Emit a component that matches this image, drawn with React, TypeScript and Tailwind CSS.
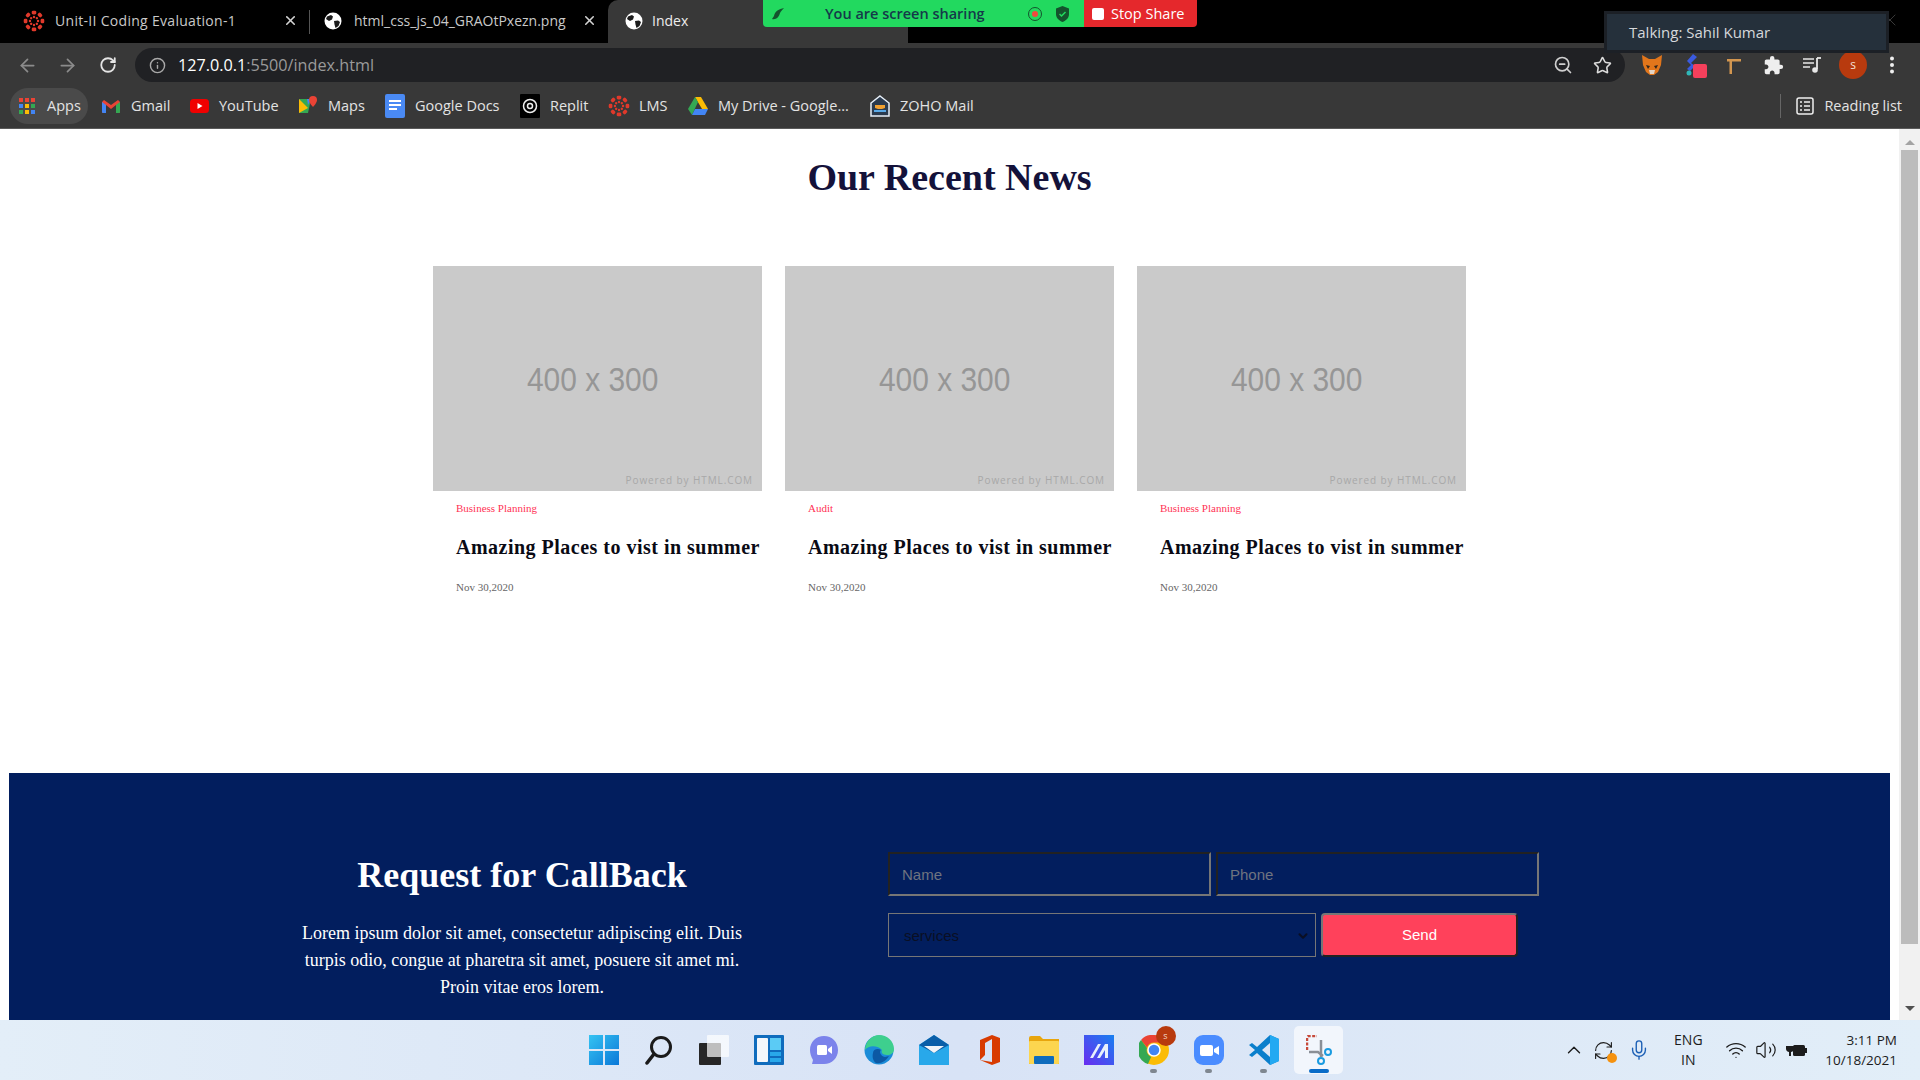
import { ArrowLeft, ArrowRight, ChevronDown, ChevronUp, Info, Mic, RefreshCw, RotateCw, Star, Volume2, Wifi, X, ZoomOut } from "lucide-react";
import { MdExtension } from "react-icons/md";

const ui = "font-['Open_Sans',sans-serif]";
const serif = "font-['Liberation_Serif',serif]";

function Canvas({ size = 22 }: { size?: number }) {
  const dots = [0, 45, 90, 135, 180, 225, 270, 315];
  return (
    <svg width={size} height={size} viewBox="0 0 24 24">
      {dots.map((a) => (
        <g key={a} transform={`rotate(${a} 12 12)`}>
          <rect x="9.5" y="0.8" width="5" height="4" rx="1.5" fill="#e0392b" />
          <circle cx="12" cy="7.6" r="1.3" fill="#e0392b" />
        </g>
      ))}
    </svg>
  );
}

function Globe() {
  return (
    <svg width="18" height="18" viewBox="0 0 18 18">
      <circle cx="9" cy="9" r="8.5" fill="#fff" />
      <path d="M3 4.5 7 3l2 1.5-1 3-3 1.5L2 7zM10 9l4-.5 2 1.500-1.500 4-3 2-1-3.500z" fill="#1c1c1c" />
    </svg>
  );
}

function Bookmark({ icon, label, w }: { icon: React.ReactNode; label: string; w: string }) {
  return (
    <div className={`flex items-center gap-[9px] ${w}`}>
      <span className="flex w-[22px] justify-center">{icon}</span>
      <span className="whitespace-nowrap">{label}</span>
    </div>
  );
}

function Tab({ title, icon, className, lead, text }: { title: string; icon: React.ReactNode; className: string; lead: string; text: string }) {
  return (
    <div className={`flex h-[43px] items-center pb-[2px] ${className}`}>
      <span className={`flex w-[22px] justify-center ${lead}`}>{icon}</span>
      <span className={`ml-[10px] flex-1 overflow-hidden whitespace-nowrap text-[#c9c9c9] ${text}`}>{title}</span>
      <X size={15} strokeWidth={2.5} className="mr-[11px] ml-[8px] text-[#d4d4d4]" />
    </div>
  );
}

function NewsCard({ category }: { category: string }) {
  return (
    <div className="w-[329px]">
      <div className="relative flex h-[225px] items-center justify-center bg-[#cacaca] pt-[2px] pr-[9px] font-['Liberation_Sans',sans-serif] text-[34px] text-[#969696]">
        <span className="scale-x-[0.88]">400 x 300</span>
        <span className={`absolute right-[9px] bottom-[3px] text-[10px] tracking-[0.9px] text-[#a8a8a8] ${ui}`}>Powered by HTML.COM</span>
      </div>
      <div className={`pl-[23px] ${serif}`}>
        <p className="mt-[10px] text-[11px] leading-[14px] text-[#ff3355]">{category}</p>
        <h3 className="mt-[20px] text-[20px] leading-[24px] font-bold tracking-[0.49px] whitespace-nowrap text-[#0a0a14]">
          Amazing Places to vist in summer
        </h3>
        <p className="mt-[21px] text-[11px] leading-[14px] text-[#666]">Nov 30,2020</p>
      </div>
    </div>
  );
}

function TaskIcon({ children, active, dot }: { children: React.ReactNode; active?: boolean; dot?: boolean }) {
  return (
    <div className="relative flex h-[48px] w-[55px] items-center justify-center">
      {active && <span className="absolute inset-y-0 left-[3px] w-[49px] rounded-[5px] bg-[#f2f6fc]" />}
      <span className="relative flex">{children}</span>
      {dot && <span className="absolute bottom-[1px] h-[4px] w-[7px] rounded-full bg-[#7f8790]" />}
      {active && <span className="absolute bottom-[1px] h-[4px] w-[20px] rounded-full bg-[#0a6cc8]" />}
    </div>
  );
}

export default function App() {
  return (
    <div className={`flex h-[1080px] w-[1920px] flex-col overflow-hidden bg-white ${ui}`}>
      {/* tab strip */}
      <div className="relative flex h-[43px] shrink-0 bg-black">
        <Tab title="Unit-II Coding Evaluation-1" icon={<Canvas />} className="w-[309px]" lead="ml-[23px]" text="text-[14px] tracking-[0.3px]" />
        <span className="mt-[10px] h-[24px] w-px bg-[#555]" />
        <Tab title="html_css_js_04_GRAOtPxezn.png" icon={<Globe />} className="w-[298px]" lead="ml-[12px]" text="text-[14px]" />
        <div className="flex h-[43px] w-[300px] items-center rounded-t-[10px] bg-[#383838] pb-[2px]">
          <span className="ml-[15px] flex w-[22px] justify-center"><Globe /></span>
          <span className="ml-[7px] text-[14px] text-[#eee]">Index</span>
        </div>
        {/* zoom share bar */}
        <div className="absolute top-0 left-[763px] flex h-[27px] items-stretch overflow-hidden rounded-b-[4px]">
          <div className="flex w-[321px] items-center bg-[#22d95f] pl-[8px]">
            <svg width="14" height="14" viewBox="0 0 14 14"><path d="M13 1C8 2 4 4 3 9L1 12c4 1 7-2 8-6 1-2 3-4 4-5z" fill="#14532d" /></svg>
            <span className="ml-[40px] text-[14.5px] font-semibold text-[#153a4a]">You are screen sharing</span>
            <svg className="ml-[42px]" width="16" height="16" viewBox="0 0 16 16"><circle cx="8" cy="8" r="6.500" fill="none" stroke="#14532d" /><circle cx="8" cy="8" r="3" fill="#f0493e" /></svg>
            <svg className="ml-[12px]" width="15" height="16" viewBox="0 0 15 16"><path d="M7.500 0 14 2.500V8c0 4-3 6.500-6.500 8C4 14.500 1 12 1 8V2.500z" fill="#14532d" /><path d="m4.500 8 2 2 4-4" stroke="#22d95f" strokeWidth="1.500" fill="none" /></svg>
          </div>
          <div className="flex w-[113px] items-center bg-[#e5282c] pl-[8px] text-[14.5px] text-white">
            <span className="h-[12px] w-[12px] rounded-[2px] bg-white" />
            <span className="ml-[7px]">Stop Share</span>
          </div>
        </div>
        {/* talking popup */}
        <div className="absolute top-[11px] left-[1604px] z-10 flex h-[42px] w-[285px] items-center border-[3px] border-[#1c2026] bg-[#25303b] pl-[22px] text-[15px] text-[#d5d8dc]">
          Talking: Sahil Kumar
        </div>
        <X size={20} strokeWidth={1} className="absolute top-[10px] right-[20px] text-[#444]" />
      </div>

      {/* toolbar */}
      <div className="flex h-[44px] shrink-0 items-center bg-[#383838] pl-[17px]">
        <ArrowLeft size={21} className="text-[#8b8b8b]" />
        <ArrowRight size={21} className="ml-[19px] text-[#8b8b8b]" />
        <RotateCw size={18} strokeWidth={2.4} className="ml-[21px] text-[#e4e4e4]" />
        <div className="ml-[18px] flex h-[34px] w-[1490px] items-center rounded-full bg-[#202124] pl-[14px]">
          <Info size={17} className="text-[#a9a9a9]" />
          <span className="ml-[12px] text-[16.2px]">
            <span className="text-white">127.0.0.1</span>
            <span className="text-[#9a9a9a]">:5500/index.html</span>
          </span>
          <span className="flex-1" />
          <ZoomOut size={20} className="text-[#cfcfcf]" />
          <Star size={19} strokeWidth={2} className="mr-[13px] ml-[20px] text-[#dcdcdc]" />
        </div>
        <svg className="ml-[16px]" width="22" height="20" viewBox="0 0 22 20"><path d="M1 0l7 4h6l7-4-1 10-3 7-4 3H9l-4-3-3-7z" fill="#e2761b" /><path d="M5 10l4 1-2 3zM17 10l-4 1 2 3z" fill="#33261a" /><path d="M8 15h6l-1 4H9z" fill="#e4d5c6" /></svg>
        <div className="relative ml-[23px] h-[24px] w-[14px]">
          <svg width="12" height="24" viewBox="0 0 12 24"><path d="M7 1l4 3-6 6 4 3-5 5-3-2 4-4-4-4z" fill="#3a5be0" /><circle cx="3" cy="20" r="2.500" fill="#2fb7b7" /></svg>
          <span className="absolute top-[11px] left-[7px] h-[14px] w-[14px] rounded-[2px] bg-[#f5405c]" />
        </div>
        <svg className="ml-[26px]" width="16" height="20" viewBox="0 0 16 20"><path d="M1 4h14v2.500H6V19H3.500V6.500H1z" fill="#d3964f" /></svg>
        <MdExtension size={21} className="ml-[21px] text-[#eee]" />
        <svg className="ml-[19px]" width="18" height="18" viewBox="0 0 18 18"><path d="M0 3h11M0 7h11M0 11h7" stroke="#e8e8e8" strokeWidth="1.600" /><path d="M14 2v11" stroke="#e8e8e8" strokeWidth="1.800" /><path d="M14 2h4" stroke="#e8e8e8" strokeWidth="1.800" /><circle cx="12" cy="14" r="2.800" fill="#e8e8e8" /></svg>
        <div className="ml-[18px] flex h-[28px] w-[28px] items-center justify-center rounded-full bg-[#b83a0e] text-[12px] text-[#f5e0d8]">s</div>
        <svg className="ml-[23px]" width="4" height="18" viewBox="0 0 4 18"><circle cx="2" cy="2.500" r="2" fill="#eee" /><circle cx="2" cy="9" r="2" fill="#eee" /><circle cx="2" cy="15.500" r="2" fill="#eee" /></svg>
      </div>

      {/* bookmarks */}
      <div className="flex h-[42px] shrink-0 items-center border-b border-[#5a5a5a] bg-[#383838] pb-[3px] pl-[10px] text-[14.5px] text-[#e3e3e3]">
        <div className="flex h-[36px] w-[78px] items-center rounded-full bg-[#4a4a4a] pl-[8px]">
          <svg width="18" height="18" viewBox="0 0 18 18">
            {["#ea4335", "#ea4335", "#ea4335", "#4285f4", "#fbbc05", "#34a853", "#34a853", "#fbbc05", "#4285f4"].map((c, i) => (
              <rect key={i} x={1 + (i % 3) * 6} y={1 + Math.floor(i / 3) * 6} width="4" height="4" fill={c} />
            ))}
          </svg>
          <span className="ml-[11px]">Apps</span>
        </div>
        <Bookmark w="w-[88px] ml-[12px]" label="Gmail" icon={<svg width="18" height="14" viewBox="0 0 18 14"><path d="M0 3v10a1 1 0 0 0 1 1h3V6l5 4 5-4v8h3a1 1 0 0 0 1-1V3l-2-2-7 5-7-5z" fill="#ea4335" /><path d="M0 3v10a1 1 0 0 0 1 1h3V6z" fill="#4285f4" /><path d="M18 3v10a1 1 0 0 1-1 1h-3V6z" fill="#34a853" /></svg>} />
        <Bookmark w="w-[109px]" label="YouTube" icon={<svg width="19" height="14" viewBox="0 0 19 14"><rect width="19" height="14" rx="3.500" fill="#f00000" /><path d="m7.500 4 5 3-5 3z" fill="#fff" /></svg>} />
        <Bookmark w="w-[87px]" label="Maps" icon={<svg width="18" height="20" viewBox="0 0 18 20"><path d="M0 3h12l-3 14H0z" fill="#34a853" /><path d="M0 3l9 9-9 5z" fill="#fbbc05" /><path d="M8 3h4l-3 6z" fill="#4285f4" /><path d="M14 0a4 4 0 0 1 4 4c0 3-4 7-4 7s-4-4-4-7a4 4 0 0 1 4-4z" fill="#ea4335" /></svg>} />
        <Bookmark w="w-[135px]" label="Google Docs" icon={<svg width="20" height="24" viewBox="0 0 20 24"><rect width="20" height="24" rx="2" fill="#4a8af4" /><path d="M4 7h12M4 11h12M4 15h8" stroke="#fff" strokeWidth="2" /></svg>} />
        <Bookmark w="w-[89px]" label="Replit" icon={<svg width="20" height="24" viewBox="0 0 20 24"><rect width="20" height="24" rx="1" fill="#000" /><circle cx="10" cy="12" r="6.500" fill="none" stroke="#eee" strokeWidth="1.500" /><circle cx="10" cy="12" r="2.500" fill="none" stroke="#eee" strokeWidth="1.500" /></svg>} />
        <Bookmark w="w-[79px]" label="LMS" icon={<Canvas />} />
        <Bookmark w="w-[182px]" label="My Drive - Google..." icon={<svg width="20" height="18" viewBox="0 0 20 18"><path d="M7 0h6l7 12h-6z" fill="#fbbc05" /><path d="M7 0l3 5-6 13-4-6z" fill="#34a853" /><path d="M4 18l3-6h13l-3 6z" fill="#4285f4" /></svg>} />
        <Bookmark w="w-[110px]" label="ZOHO Mail" icon={<svg width="20" height="22" viewBox="0 0 20 22"><path d="M10 1 19 8v13H1V8z" fill="#2a3a4e" stroke="#e8f0f8" strokeWidth="1.500" /><path d="M5 10h10v3l-3 1H8L5 13z" fill="#f0a030" /><path d="M4 16h12" stroke="#5aa9e6" strokeWidth="2" /></svg>} />
        <span className="flex-1" />
        <span className="h-[24px] w-px bg-[#666]" />
        <svg className="ml-[15px]" width="18" height="18" viewBox="0 0 18 18"><rect x="1" y="1" width="16" height="16" rx="2" fill="none" stroke="#eee" strokeWidth="1.500" /><path d="M4 5h2M8 5h6M4 9h2M8 9h6M4 13h2M8 13h6" stroke="#eee" strokeWidth="1.500" /></svg>
        <span className="mr-[18px] ml-[10px]">Reading list</span>
      </div>

      {/* page */}
      <div className="flex h-[891px] shrink-0">
        <div className="flex w-[1899px] flex-col px-[9px]">
          <section className="flex h-[644px] flex-col items-center">
            <h2 className={`mt-[23px] text-[38px] leading-[50px] font-bold text-[#14123a] ${serif}`}>Our Recent News</h2>
            <div className="mt-[64px] flex gap-[23px]">
              <NewsCard category="Business Planning" />
              <NewsCard category="Audit" />
              <NewsCard category="Business Planning" />
            </div>
          </section>
          <section className="flex h-[247px] overflow-hidden bg-[#021e5e] text-white">
            <div className={`mt-[79px] ml-[278px] w-[470px] text-center ${serif}`}>
              <h2 className="text-[36px] leading-[46px] font-bold">Request for CallBack</h2>
              <p className="mt-[22px] text-[18px] leading-[27px]">
                Lorem ipsum dolor sit amet, consectetur adipiscing elit. Duis turpis odio, congue at pharetra sit amet, posuere sit amet mi. Proin vitae eros lorem.
              </p>
            </div>
            <div className="mt-[79px] ml-[131px] font-['Liberation_Sans',sans-serif] text-[15px]">
              <div className="flex gap-[5px]">
                <div className="flex h-[44px] w-[323px] items-center border-2 border-t-[#222] border-r-[#767676] border-b-[#767676] border-l-[#222] pt-[2px] pl-[12px] text-[#6f7480]">Name</div>
                <div className="flex h-[44px] w-[323px] items-center border-2 border-t-[#222] border-r-[#767676] border-b-[#767676] border-l-[#222] pt-[2px] pl-[12px] text-[#6f7480]">Phone</div>
              </div>
              <div className="mt-[17px] flex gap-[5px]">
                <div className="flex h-[44px] w-[428px] items-center border border-[#767676] pt-[2px] pl-[15px] text-[#0a0f24]">
                  services
                  <ChevronDown size={14} strokeWidth={3.5} className="mr-[5px] ml-auto text-[#0a0f24]" />
                </div>
                <div className="flex h-[44px] w-[197px] items-center justify-center rounded-[4px] border-2 border-t-[#767676] border-r-[#222] border-b-[#222] border-l-[#767676] bg-[#ff415b] pt-[1px] font-medium text-[#fff]">Send</div>
              </div>
            </div>
          </section>
        </div>
        <div className="flex w-[21px] flex-col items-center bg-[#f1f1f1]">
          <span className="mt-[11px] h-0 w-0 border-x-[5px] border-b-[5px] border-x-transparent border-b-[#a3a3a3]" />
          <span className="mt-[5px] h-[794px] w-[17px] bg-[#bcbcbc]" />
          <span className="mt-[62px] h-0 w-0 border-x-[5px] border-t-[5px] border-x-transparent border-t-[#505050]" />
        </div>
      </div>

      {/* taskbar */}
      <div className="flex h-[60px] shrink-0 items-center bg-gradient-to-r from-[#e3eef8] via-[#d8e3f6] to-[#e2eef8]">
        <div className="ml-[576px] flex items-center">
          <TaskIcon><svg width="30" height="30" viewBox="0 0 30 30"><defs><linearGradient id="s" x1="0" y1="0" x2="1" y2="1"><stop offset="0" stopColor="#35c3f2" /><stop offset="1" stopColor="#0a78d8" /></linearGradient></defs><path d="M0 0h14v14H0zM16 0h14v14H16zM0 16h14v14H0zM16 16h14v14H16z" fill="url(#s)" /></svg></TaskIcon>
          <TaskIcon><svg width="28" height="30" viewBox="0 0 28 30"><circle cx="16" cy="12" r="9.500" fill="none" stroke="#1a1a1a" strokeWidth="3" /><path d="M9 19 2 28" stroke="#1a1a1a" strokeWidth="3.500" strokeLinecap="round" /></svg></TaskIcon>
          <TaskIcon><svg width="30" height="30" viewBox="0 0 30 30"><rect x="0" y="8" width="22" height="22" rx="1" fill="#262626" /><rect x="8" y="0" width="22" height="22" rx="1" fill="#fff" fillOpacity="0.7" /></svg></TaskIcon>
          <TaskIcon><svg width="30" height="30" viewBox="0 0 30 30"><rect width="30" height="30" rx="1" fill="#0f6cbd" /><rect x="3" y="3" width="11" height="24" rx="1" fill="#f4f7fb" /><rect x="16" y="3" width="11" height="12" fill="#5bcbf5" /><rect x="16" y="17" width="11" height="4" fill="#28a8ea" /><rect x="16" y="23" width="11" height="4" fill="#28a8ea" /></svg></TaskIcon>
          <TaskIcon><svg width="30" height="30" viewBox="0 0 30 30"><path d="M15 1c8 0 14 6 14 14s-6 14-14 14H3l1-4C2 22 1 18 1 15 1 7 7 1 15 1z" fill="#7b83eb" /><rect x="8" y="10" width="10" height="10" rx="1.500" fill="#fff" /><path d="m19 14 4-3v8l-4-3z" fill="#fff" /></svg></TaskIcon>
          <TaskIcon><svg width="30" height="30" viewBox="0 0 30 30"><circle cx="15" cy="15" r="14.500" fill="#1b8cd8" /><path d="M1 14C2 5 9 0 15 0c8 0 15 6 15 14 0 4-3 6-7 6-5 0-6-3-5-5-3-4-13-6-17 0z" fill="#3ecf8e" /><path d="M9 18c0-4 5-5 8-3-2 1-1 6 4 7l4-1c-3 5-8 8-13 7-3-2-4-6-3-10z" fill="#0c59a4" /></svg></TaskIcon>
          <TaskIcon><svg width="30" height="30" viewBox="0 0 30 30"><path d="M0 10 15 0l15 10v20H0z" fill="#28a8ea" /><path d="M0 10 15 0l15 10-15 8z" fill="#0a5ea8" /><path d="M5 11h20l-10 7z" fill="#f0f4f8" /></svg></TaskIcon>
          <TaskIcon><svg width="24" height="30" viewBox="0 0 24 30"><path d="M3 5 15 0l8 3v24l-8 3-12-5 12 2V4L8 8v12l-5 5z" fill="#d83b01" /></svg></TaskIcon>
          <TaskIcon><svg width="30" height="28" viewBox="0 0 30 28"><path d="M0 2a2 2 0 0 1 2-2h9l3 3h16v25H0z" fill="#e8a50d" /><rect y="5" width="30" height="23" rx="1" fill="#fcd54f" /><rect x="5" y="20" width="20" height="8" rx="1" fill="#0f6cbd" /></svg></TaskIcon>
          <TaskIcon><svg width="30" height="30" viewBox="0 0 30 30"><defs><linearGradient id="m" x1="0" y1="1" x2="1" y2="0"><stop offset="0" stopColor="#6a2cf0" /><stop offset="1" stopColor="#1780f0" /></linearGradient></defs><rect width="30" height="30" fill="url(#m)" /><path d="M6 23 14 9h3L9 23zM13 23l8-14h3v14h-3v-8l-5 8z" fill="#e8f0fc" /></svg></TaskIcon>
          <TaskIcon dot>
            <svg width="30" height="30" viewBox="0 0 30 30"><circle cx="15" cy="15" r="15" fill="#fbbc05" /><path d="M15 0a15 15 0 0 1 13 7.500H15a7.500 7.500 0 0 0-7 5L2 5a15 15 0 0 1 13-5z" fill="#ea4335" /><path d="M2 5l6 8a7.500 7.500 0 0 0 4 9l-3 7A15 15 0 0 1 2 5z" fill="#34a853" /><circle cx="15" cy="15" r="6" fill="#4285f4" stroke="#fff" strokeWidth="1.500" /></svg>
            <span className="absolute top-[-9px] right-[-7px] flex h-[20px] w-[20px] items-center justify-center rounded-full bg-[#b83a0e] text-[9px] text-[#f5d8c8]">s</span>
          </TaskIcon>
          <TaskIcon dot><svg width="30" height="30" viewBox="0 0 30 30"><rect width="30" height="30" rx="9" fill="#4a8cff" /><rect x="6" y="10" width="13" height="11" rx="2" fill="#fff" /><path d="m20 14 5-3v9l-5-3z" fill="#fff" /></svg></TaskIcon>
          <TaskIcon dot><svg width="30" height="30" viewBox="0 0 30 30"><path d="M21 0 30 4v22l-9 4L8 18l-5 4-3-2 6-5-6-5 3-2 5 4z" fill="#0a7fcc" /><path d="M21 0 30 4v22l-9 4z" fill="#23a9f2" /><path d="M21 8 13 15l8 7z" fill="#dce7f6" /></svg></TaskIcon>
          <TaskIcon active><svg width="26" height="30" viewBox="0 0 26 30"><path d="M1 15V3a2 2 0 0 1 2-2h8" fill="none" stroke="#c74a3a" strokeWidth="2.500" strokeDasharray="3 1.500" /><path d="M3 17h9l5 4" stroke="#8a8f96" strokeWidth="2.500" fill="none" /><path d="M15 5v17" stroke="#8a8f96" strokeWidth="2.500" /><circle cx="22" cy="17" r="3" fill="none" stroke="#1a9be0" strokeWidth="2" /><circle cx="15" cy="26" r="3" fill="none" stroke="#1a9be0" strokeWidth="2" /></svg></TaskIcon>
        </div>
        <div className="flex flex-1 items-center justify-end pr-[23px] text-[#1c1c1c]">
          <ChevronUp size={22} strokeWidth={1.500} />
          <div className="relative ml-[8px]">
            <RefreshCw size={21} strokeWidth={1.300} />
            <span className="absolute right-[-3px] bottom-[-2px] h-[10px] w-[10px] rounded-full bg-[#f5920f]" />
          </div>
          <Mic size={22} strokeWidth={1.500} className="ml-[14px] text-[#1b5fb5]" />
          <div className="ml-[13px] w-[50px] text-center text-[14px] leading-[20px]"><div>ENG</div><div>IN</div></div>
          <Wifi size={22} strokeWidth={1.500} className="ml-[12px]" />
          <Volume2 size={22} strokeWidth={1.300} className="ml-[8px]" />
          <svg className="ml-[8px]" width="22" height="18" viewBox="0 0 22 18"><path d="M3 1v4M7 1v4M1 5h8v3c0 2-2 3-3 3v4H4v-4C3 11 1 10 1 8z" fill="#1c1c1c" /><rect x="8" y="4" width="12" height="11" rx="1.500" fill="#1c1c1c" /><rect x="20" y="7" width="2" height="5" fill="#1c1c1c" /></svg>
          <div className="ml-[18px] text-right text-[13.5px] leading-[20px]"><div>3:11 PM</div><div>10/18/2021</div></div>
        </div>
      </div>
    </div>
  );
}
